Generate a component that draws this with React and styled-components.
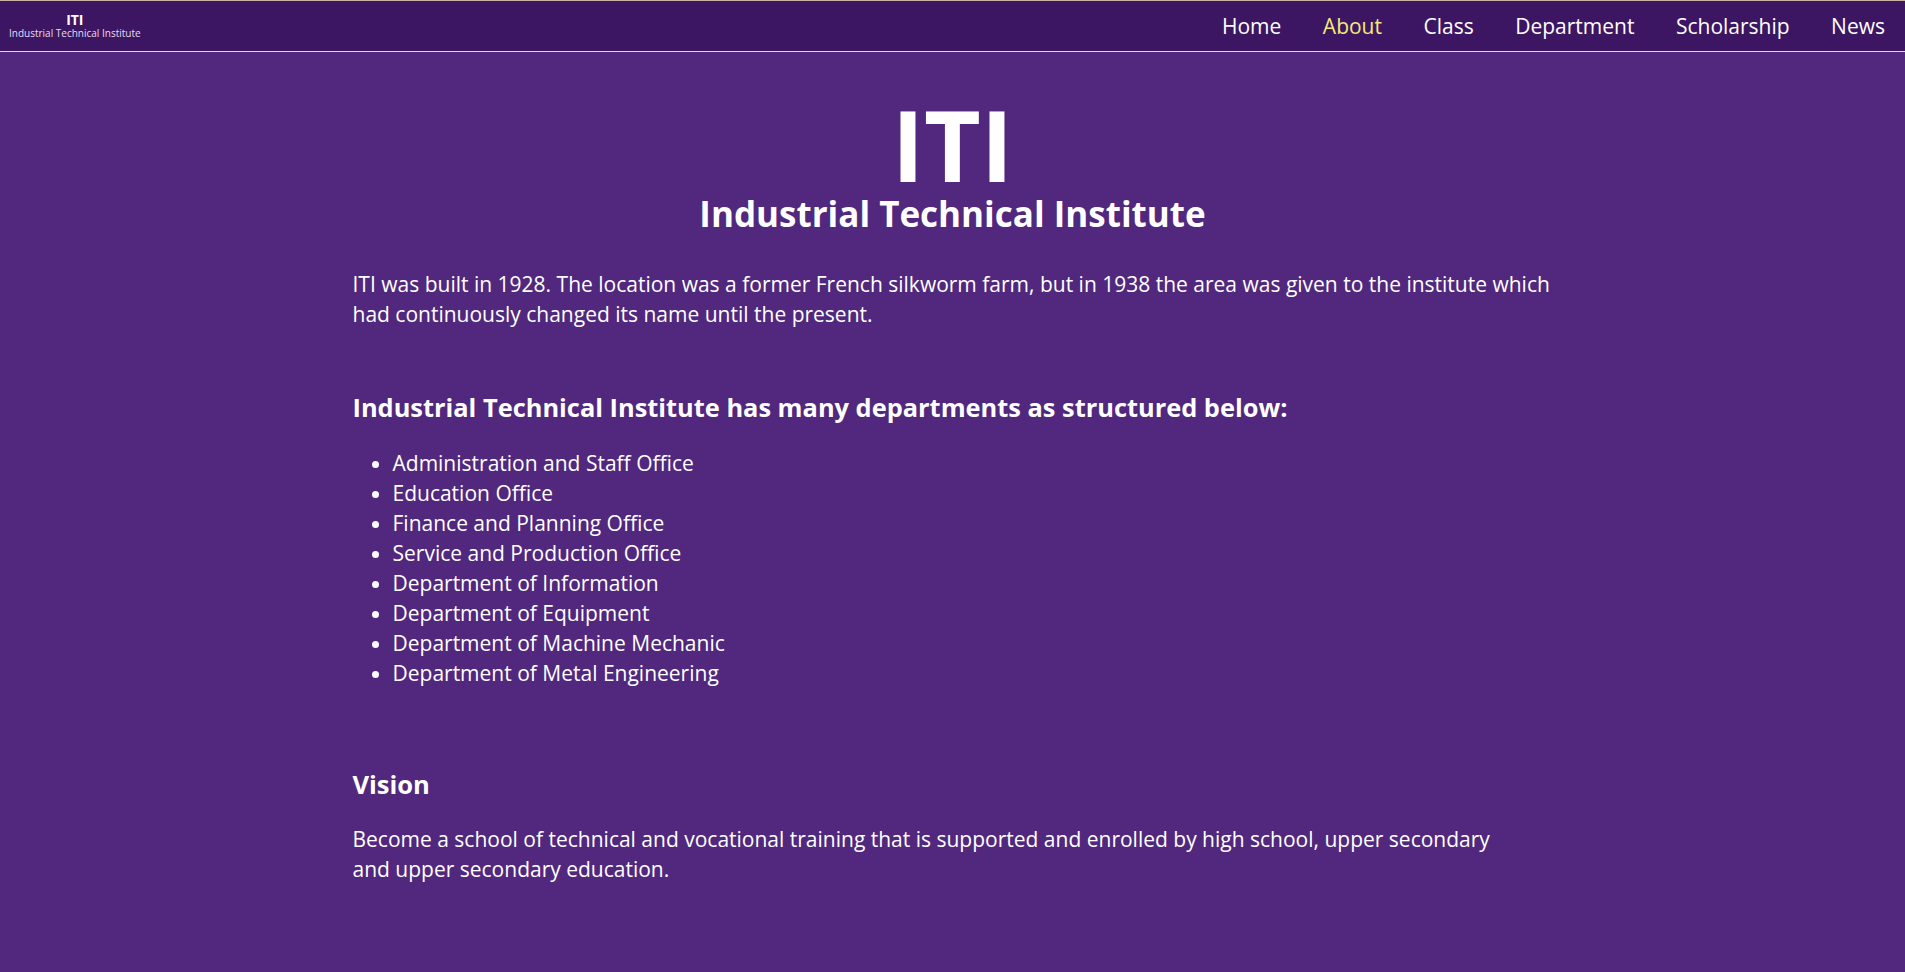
import React from 'react';
import styled, { createGlobalStyle } from 'styled-components';

const GlobalStyle = createGlobalStyle`
  html, body {
    margin: 0;
    padding: 0;
  }
  body {
    background: #51287e;
    color: #ffffff;
    font-family: 'Open Sans', 'Noto Sans', sans-serif;
  }
  * {
    box-sizing: border-box;
  }
`;

const Page = styled.div`
  min-height: 100vh;
  background: #51287e;
`;

const Nav = styled.nav`
  display: flex;
  align-items: center;
  justify-content: space-between;
  height: 52px;
  padding: 0 20px 0 9px;
  background: #3c1663;
  border-top: 1px solid #c9b3a3;
  border-bottom: 1px solid #eadf8c;
`;

const Brand = styled.a`
  display: flex;
  flex-direction: column;
  align-items: center;
  color: #fff;
  text-decoration: none;
`;

const BrandTitle = styled.span`
  font-size: 14px;
  font-weight: 700;
  line-height: 15px;
`;

const BrandSub = styled.span`
  font-size: 10px;
  line-height: 13px;
  color: #e6dcef;
`;

const Menu = styled.ul`
  display: flex;
  gap: 41.5px;
  margin: 0;
  padding: 0;
  list-style: none;
`;

const MenuLink = styled.a`
  font-size: 21px;
  line-height: 26px;
  color: ${props => (props.active ? '#f4ea7a' : '#ffffff')};
  text-decoration: none;
`;

const Main = styled.main`
  width: 1200px;
  margin: 0 auto;
  padding: 44px 0 80px;
`;

const Hero = styled.header`
  text-align: center;
`;

const HeroTitle = styled.h1`
  margin: 0;
  font-size: 98px;
  font-weight: 700;
  line-height: 96px;
`;

const HeroSub = styled.h2`
  margin: 0;
  font-size: 35px;
  font-weight: 700;
  line-height: 44px;
`;

const Text = styled.p`
  margin: ${props => props.spacing || '0'};
  max-width: ${props => props.maxWidth || 'none'};
  font-size: 21px;
  line-height: 30px;
`;

const SectionTitle = styled.h3`
  margin: ${props => props.spacing};
  font-size: ${props => props.size || '25.4px'};
  font-weight: 700;
  line-height: 36px;
`;

const List = styled.ul`
  margin: 23px 0 0;
  padding-left: 40px;
`;

const Item = styled.li`
  font-size: 21px;
  line-height: 30px;
`;

const links = ['Home', 'About', 'Class', 'Department', 'Scholarship', 'News'];

const departments = [
  'Administration and Staff Office',
  'Education Office',
  'Finance and Planning Office',
  'Service and Production Office',
  'Department of Information',
  'Department of Equipment',
  'Department of Machine Mechanic',
  'Department of Metal Engineering',
];

export default function App() {
  return (
    <Page>
      <GlobalStyle />
      <Nav>
        <Brand href="#">
          <BrandTitle>ITI</BrandTitle>
          <BrandSub>Industrial Technical Institute</BrandSub>
        </Brand>
        <Menu>
          {links.map(link => (
            <li key={link}>
              <MenuLink href="#" active={link === 'About' ? 1 : 0}>
                {link}
              </MenuLink>
            </li>
          ))}
        </Menu>
      </Nav>
      <Main>
        <Hero>
          <HeroTitle>ITI</HeroTitle>
          <HeroSub>Industrial Technical Institute</HeroSub>
        </Hero>
        <Text spacing="33px 0 0">
          ITI was built in 1928. The location was a former French silkworm farm, but in 1938 the area was
          given to the institute which had continuously changed its name until the present.
        </Text>
        <SectionTitle spacing="60px 0 0">
          Industrial Technical Institute has many departments as structured below:
        </SectionTitle>
        <List>
          {departments.map(d => (
            <Item key={d}>{d}</Item>
          ))}
        </List>
        <SectionTitle spacing="78px 0 0" size="25.5px">
          Vision
        </SectionTitle>
        <Text spacing="22px 0 0" maxWidth="1150px">
          Become a school of technical and vocational training that is supported and enrolled by high school,
          upper secondary and upper secondary education.
        </Text>
      </Main>
    </Page>
  );
}
